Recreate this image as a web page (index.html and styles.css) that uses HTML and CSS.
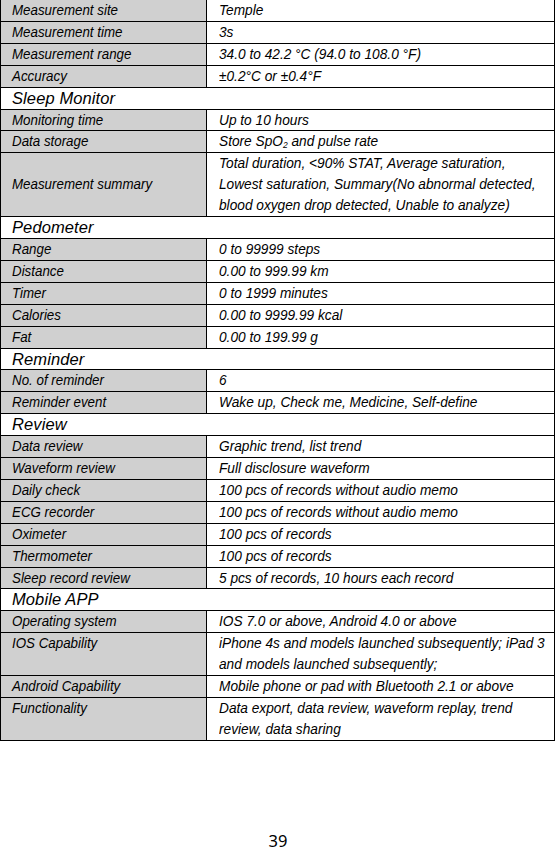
FILE: index.html
```html
<!DOCTYPE html>
<html>
<head>
<meta charset="utf-8">
<link rel="stylesheet" href="styles.css">
</head>
<body>
<div class="page">
<table class="spec">
<colgroup><col class="c1"><col class="c2"></colgroup>
<tbody>
<tr><td class="k"><div class="t">Measurement site</div></td><td class="v"><div class="t">Temple</div></td></tr>
<tr><td class="k"><div class="t">Measurement time</div></td><td class="v"><div class="t">3s</div></td></tr>
<tr><td class="k"><div class="t">Measurement range</div></td><td class="v"><div class="t">34.0 to 42.2 °C (94.0 to 108.0 °F)</div></td></tr>
<tr><td class="k"><div class="t">Accuracy</div></td><td class="v"><div class="t">±0.2°C or ±0.4°F</div></td></tr>
<tr><td class="h" colspan="2">Sleep Monitor</td></tr>
<tr><td class="k"><div class="t">Monitoring time</div></td><td class="v"><div class="t">Up to 10 hours</div></td></tr>
<tr><td class="k"><div class="t">Data storage</div></td><td class="v"><div class="t">Store SpO<span class="sub">2</span> and pulse rate</div></td></tr>
<tr><td class="k"><div class="t">Measurement summary</div></td><td class="v"><div class="t">Total duration, &lt;90% STAT, Average saturation, Lowest saturation, Summary(No abnormal detected, blood oxygen drop detected, Unable to analyze)</div></td></tr>
<tr><td class="h" colspan="2">Pedometer</td></tr>
<tr><td class="k"><div class="t">Range</div></td><td class="v"><div class="t">0 to 99999 steps</div></td></tr>
<tr><td class="k"><div class="t">Distance</div></td><td class="v"><div class="t">0.00 to 999.99 km</div></td></tr>
<tr><td class="k"><div class="t">Timer</div></td><td class="v"><div class="t">0 to 1999 minutes</div></td></tr>
<tr><td class="k"><div class="t">Calories</div></td><td class="v"><div class="t">0.00 to 9999.99 kcal</div></td></tr>
<tr><td class="k"><div class="t">Fat</div></td><td class="v"><div class="t">0.00 to 199.99 g</div></td></tr>
<tr><td class="h" colspan="2">Reminder</td></tr>
<tr><td class="k"><div class="t">No. of reminder</div></td><td class="v"><div class="t">6</div></td></tr>
<tr><td class="k"><div class="t">Reminder event</div></td><td class="v"><div class="t">Wake up, Check me, Medicine, Self-define</div></td></tr>
<tr><td class="h" colspan="2">Review</td></tr>
<tr><td class="k"><div class="t">Data review</div></td><td class="v"><div class="t">Graphic trend, list trend</div></td></tr>
<tr><td class="k"><div class="t">Waveform review</div></td><td class="v"><div class="t">Full disclosure waveform</div></td></tr>
<tr><td class="k"><div class="t">Daily check</div></td><td class="v"><div class="t">100 pcs of records without audio memo</div></td></tr>
<tr><td class="k"><div class="t">ECG recorder</div></td><td class="v"><div class="t">100 pcs of records without audio memo</div></td></tr>
<tr><td class="k"><div class="t">Oximeter</div></td><td class="v"><div class="t">100 pcs of records</div></td></tr>
<tr><td class="k"><div class="t">Thermometer</div></td><td class="v"><div class="t">100 pcs of records</div></td></tr>
<tr><td class="k"><div class="t">Sleep record review</div></td><td class="v"><div class="t">5 pcs of records, 10 hours each record</div></td></tr>
<tr><td class="h" colspan="2">Mobile APP</td></tr>
<tr><td class="k"><div class="t">Operating system</div></td><td class="v"><div class="t">IOS 7.0 or above, Android 4.0 or above</div></td></tr>
<tr><td class="k top"><div class="t">IOS Capability</div></td><td class="v"><div class="t">iPhone 4s and models launched subsequently; iPad 3 and models launched subsequently;</div></td></tr>
<tr><td class="k"><div class="t">Android Capability</div></td><td class="v"><div class="t">Mobile phone or pad with Bluetooth 2.1 or above</div></td></tr>
<tr><td class="k top"><div class="t">Functionality</div></td><td class="v"><div class="t">Data export, data review, waveform replay, trend review, data sharing</div></td></tr>
</tbody>
</table>
<div class="pagenum">39</div>
</div>
</body>
</html>
```
FILE: styles.css
```css
html, body {
  margin: 0;
  padding: 0;
  background: #ffffff;
}
.page {
  width: 556px;
  display: flex;
  flex-direction: column;
}
.spec {
  margin-top: -1px;
  width: 554px;
  border-collapse: collapse;
  table-layout: fixed;
  font-family: "Liberation Sans", Arial, sans-serif;
  font-style: italic;
  font-size: 14.5px;
  line-height: 20.9px;
  color: #000;
}
.c1 { width: 206px; }
.c2 { width: 348px; }
.spec td {
  border: 1px solid #000;
  padding: 0 4px 0 11px;
  vertical-align: middle;
}
.spec td.k {
  background: #d0d0d0;
}
.spec td.top {
  vertical-align: top;
}
.spec td.v {
  padding-left: 12px;
}
.t {
  width: calc(100% / 0.92);
  transform: scaleX(0.92);
  transform-origin: 0 0;
}
.spec td.v .t {
  width: calc(100% / 0.944);
  transform: scaleX(0.944);
}
.spec td.h {
  background: #fff;
  font-size: 16.5px;
  letter-spacing: 0.1px;
}
.sub {
  font-size: 9px;
  vertical-align: -2px;
  line-height: 0;
}
.pagenum {
  margin-top: 93px;
  text-align: center;
  font-family: "Noto Sans", "Open Sans", sans-serif;
  font-size: 16.5px;
  line-height: 14px;
}
```
